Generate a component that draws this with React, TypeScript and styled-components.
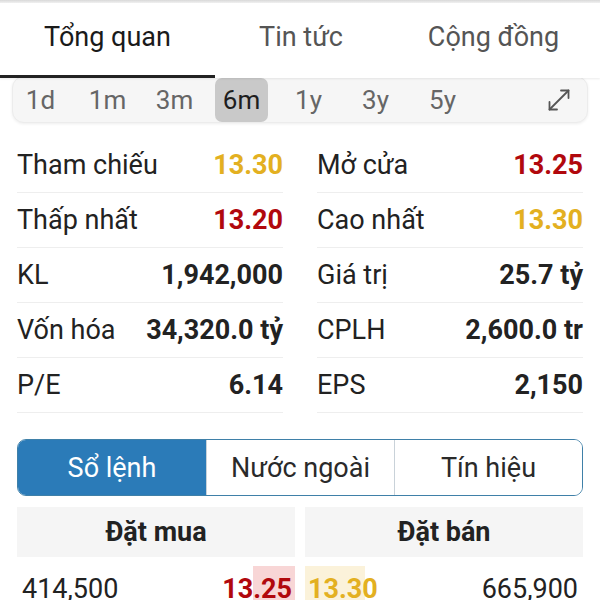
import React, { useState } from 'react';
import styled, { createGlobalStyle } from 'styled-components';

const GlobalStyle = createGlobalStyle`
  html, body {
    margin: 0;
    padding: 0;
    background: #ffffff;
    font-family: Roboto, "Noto Sans", "Liberation Sans", sans-serif;
    color: #222;
  }
  * { box-sizing: border-box; }
`;

type Tone = 'ref' | 'down' | 'plain';

interface Stat {
    label: string,
    value: string,
    tone: Tone
}

const toneColor = (tone: Tone) => {
    if (tone === 'ref') return '#e3b021';
    if (tone === 'down') return '#b1080d';
    return '#222222';
};

const stats: Stat[] = [
    { label: 'Tham chiếu', value: '13.30', tone: 'ref' },
    { label: 'Mở cửa', value: '13.25', tone: 'down' },
    { label: 'Thấp nhất', value: '13.20', tone: 'down' },
    { label: 'Cao nhất', value: '13.30', tone: 'ref' },
    { label: 'KL', value: '1,942,000', tone: 'plain' },
    { label: 'Giá trị', value: '25.7 tỷ', tone: 'plain' },
    { label: 'Vốn hóa', value: '34,320.0 tỷ', tone: 'plain' },
    { label: 'CPLH', value: '2,600.0 tr', tone: 'plain' },
    { label: 'P/E', value: '6.14', tone: 'plain' },
    { label: 'EPS', value: '2,150', tone: 'plain' },
];

const periods = ['1d', '1m', '3m', '6m', '1y', '3y', '5y'];
const mainTabs = ['Tổng quan', 'Tin tức', 'Cộng đồng'];
const bookTabs = ['Sổ lệnh', 'Nước ngoài', 'Tín hiệu'];

const Page = styled.div`
  width: 600px;
  height: 600px;
  overflow: hidden;
  display: flex;
  flex-direction: column;
  & > * {
    flex-shrink: 0;
  }
`;

const TopEdge = styled.div`
  height: 3px;
  background: linear-gradient(#d8d8d8, #f2f2f2);
`;

const TabBar = styled.div`
  display: grid;
  grid-template-columns: 215px 172px 1fr;
  height: 75px;
  position: relative;
  z-index: 1;
  background: #fff;
  box-shadow: 0 1px 2px rgba(0, 0, 0, 0.08);
`;

const Tab = styled.div<{ $active: boolean }>`
  display: flex;
  align-items: center;
  justify-content: center;
  padding-bottom: 4px;
  font-size: 27px;
  color: ${p => (p.$active ? '#1a1a1a' : '#555555')};
  border-bottom: 3.5px solid ${p => (p.$active ? '#222222' : 'transparent')};
`;

const PeriodBar = styled.div`
  margin: -2px 12px 0;
  height: 47px;
  padding: 0 17px 0 1px;
  display: flex;
  align-items: center;
  gap: 14px;
  background: #f6f6f6;
  border: 1px solid #ececec;
  border-radius: 12px;
  box-shadow: 0 1px 3px rgba(0, 0, 0, 0.07);
`;

const PeriodItem = styled.div<{ $active: boolean }>`
  width: 53px;
  height: 44px;
  display: flex;
  align-items: center;
  justify-content: center;
  font-size: 26px;
  border-radius: 7px;
  color: ${p => (p.$active ? '#1e1e1e' : '#666666')};
  background: ${p => (p.$active ? '#c9c9c9' : 'transparent')};
`;

const ExpandButton = styled.div`
  margin-left: auto;
  display: flex;
  color: #555;
`;

const StatsGrid = styled.div`
  margin-top: 15px;
  padding: 0 17px;
  display: grid;
  grid-template-columns: 1fr 1fr;
  column-gap: 34px;
`;

const StatRow = styled.div`
  height: 55px;
  display: flex;
  align-items: center;
  justify-content: space-between;
  border-bottom: 1px solid #eeeeee;
  font-size: 27px;
`;

const StatLabel = styled.span`
  color: #222;
`;

const StatValue = styled.span<{ $tone: Tone }>`
  font-weight: 700;
  color: ${p => toneColor(p.$tone)};
`;

const Segmented = styled.div`
  margin: 26px 17px 0;
  height: 57px;
  display: grid;
  grid-template-columns: 1fr 1fr 1fr;
  border: 1.5px solid #3f80a8;
  border-radius: 9px;
  overflow: hidden;
`;

const Segment = styled.div<{ $active: boolean }>`
  display: flex;
  align-items: center;
  justify-content: center;
  font-size: 27px;
  color: ${p => (p.$active ? '#ffffff' : '#2a2a2a')};
  background: ${p => (p.$active ? '#2b7bb8' : '#ffffff')};
  & + & {
    border-left: 1px solid #c9d2d9;
  }
`;

const BookHeader = styled.div`
  margin: 11px 17px 0;
  display: grid;
  grid-template-columns: 1fr 1fr;
  gap: 10px;
`;

const BookTitle = styled.div`
  height: 50px;
  display: flex;
  align-items: center;
  justify-content: center;
  background: #f5f5f5;
  font-size: 27px;
  font-weight: 700;
  color: #222;
`;

const BookRow = styled.div`
  margin: 9px 17px 0;
  display: grid;
  grid-template-columns: 1fr 1fr;
  gap: 10px;
`;

const BookSide = styled.div`
  height: 46px;
  display: flex;
  align-items: stretch;
  justify-content: space-between;
  font-size: 27px;
`;

const Volume = styled.span<{ $side: 'bid' | 'ask' }>`
  display: flex;
  align-items: center;
  color: #222;
  padding: ${p => (p.$side === 'bid' ? '0 0 0 5px' : '0 5px 0 0')};
`;

const Price = styled.span<{ $tone: Tone, $bar: string }>`
  display: flex;
  align-items: center;
  padding: 0 3px;
  font-weight: 700;
  color: ${p => toneColor(p.$tone)};
  background: ${p => p.$bar};
`;

const ExpandIcon = () => (
    <svg width="22" height="22" viewBox="0 0 22 22" fill="none" stroke="currentColor" strokeWidth="1.8" strokeLinecap="round" strokeLinejoin="round">
        <path d="M20.5 1.5 1.5 20.5" />
        <path d="M13 1.5h7.5V9" />
        <path d="M9 20.5H1.5V13" />
    </svg>
);

const App: React.FC = () => {
    const [tab, setTab] = useState<number>(0);
    const [period, setPeriod] = useState<string>('6m');
    const [bookTab, setBookTab] = useState<number>(0);

    return (
        <Page>
            <GlobalStyle />
            <TopEdge />
            <TabBar>
                {mainTabs.map((t, i) => (
                    <Tab key={t} $active={tab === i} onClick={() => setTab(i)}>{t}</Tab>
                ))}
            </TabBar>
            <PeriodBar>
                {periods.map((p) => (
                    <PeriodItem key={p} $active={period === p} onClick={() => setPeriod(p)}>{p}</PeriodItem>
                ))}
                <ExpandButton>
                    <ExpandIcon />
                </ExpandButton>
            </PeriodBar>
            <StatsGrid>
                {stats.map((s) => (
                    <StatRow key={s.label}>
                        <StatLabel>{s.label}</StatLabel>
                        <StatValue $tone={s.tone}>{s.value}</StatValue>
                    </StatRow>
                ))}
            </StatsGrid>
            <Segmented>
                {bookTabs.map((t, i) => (
                    <Segment key={t} $active={bookTab === i} onClick={() => setBookTab(i)}>{t}</Segment>
                ))}
            </Segmented>
            <BookHeader>
                <BookTitle>Đặt mua</BookTitle>
                <BookTitle>Đặt bán</BookTitle>
            </BookHeader>
            <BookRow>
                <BookSide>
                    <Volume $side='bid'>414,500</Volume>
                    <Price $tone='down' $bar='linear-gradient(90deg, transparent 0 34px, #f8d6d6 34px)'>13.25</Price>
                </BookSide>
                <BookSide>
                    <Price $tone='ref' $bar='linear-gradient(90deg, #fbf2da 0 60px, transparent 60px)'>13.30</Price>
                    <Volume $side='ask'>665,900</Volume>
                </BookSide>
            </BookRow>
        </Page>
    );
};

export default App;
